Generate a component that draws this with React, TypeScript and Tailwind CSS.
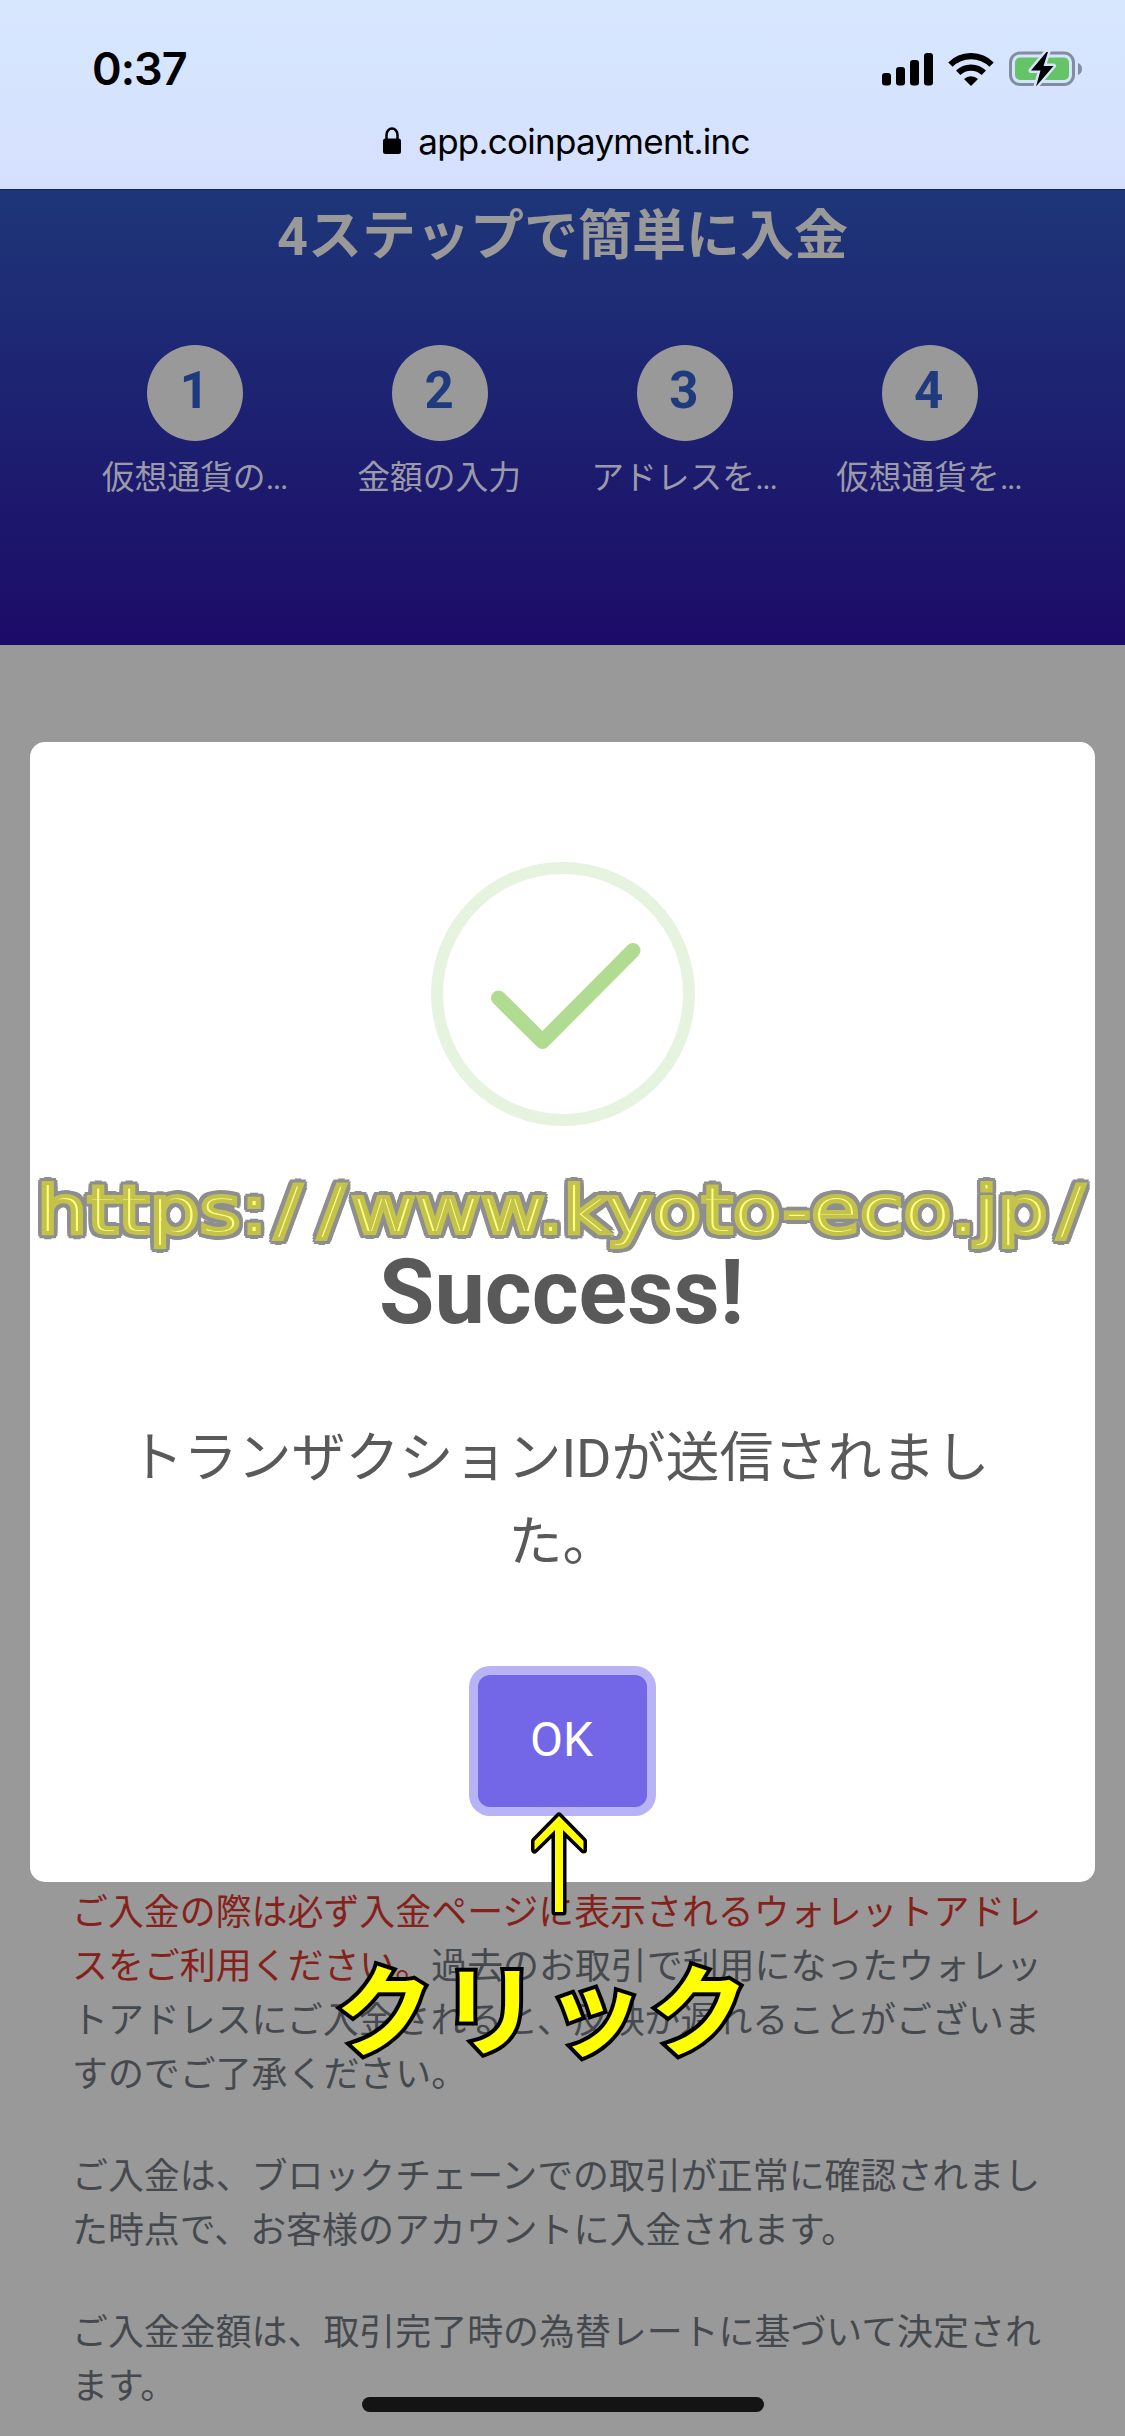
import React from 'react';

const steps = [
    { num: 1, label: '仮想通貨の', truncated: true },
    { num: 2, label: '金額の入力', truncated: false },
    { num: 3, label: 'アドレスを', truncated: true },
    { num: 4, label: '仮想通貨を', truncated: true },
];

const SignalIcon = () => (
    <svg width="52" height="33" viewBox="0 0 52 33">
        <rect x="0" y="20" width="9" height="12.5" rx="3" />
        <rect x="14" y="14" width="9" height="18.5" rx="3" />
        <rect x="28" y="7" width="9" height="25.5" rx="3" />
        <rect x="42" y="0" width="9" height="32.5" rx="3" />
    </svg>
);

const WifiIcon = () => (
    <svg width="46" height="33" viewBox="0 0 46 33">
        <g fill="none" stroke="#000" strokeWidth="6.2">
            <path d="M2.4 11.6a29.2 29.2 0 0 1 41.2 0" />
            <path d="M10.2 19.8a18.2 18.2 0 0 1 25.6 0" />
        </g>
        <path d="M23 33 16 26a10.5 10.5 0 0 1 14 0z" />
    </svg>
);

const BatteryIcon = () => (
    <svg width="74" height="36" viewBox="0 0 74 36">
        <rect x="1.5" y="2" width="63" height="31.5" rx="9.5" fill="none" stroke="#828da3" strokeWidth="3" />
        <path d="M69 12c2.6 1 4 3 4 6s-1.4 5-4 6z" fill="#828da3" />
        <rect x="6" y="6.5" width="54" height="22.5" rx="5" fill="#65c466" />
        <path
            d="M37.5 1 22 19.5h9.5L27 35.5 44.5 15H34.5L39 1z"
            fill="#000"
            stroke="#d6e4fe"
            strokeWidth="5"
            strokeLinejoin="round"
            paintOrder="stroke"
        />
    </svg>
);

const LockIcon = () => (
    <svg width="18" height="28" viewBox="0 0 18 28">
        <rect x="0" y="11.5" width="18" height="15.5" rx="2.5" />
        <path d="M3.5 13V8a5.5 6.5 0 0 1 11 0v5" fill="none" stroke="#000" strokeWidth="2.5" />
    </svg>
);

const StatusBar = () => (
    <header className="h-[189px] shrink-0 bg-linear-to-b from-[#d7e7fe] to-[#d5e0fe] font-['Inter',sans-serif] text-black">
        <div className="flex h-[114px] items-start justify-between pt-[50px] pl-[92px] pr-[42px]">
            <span className="text-[45px] leading-[38px] font-semibold tracking-[-1px]">0:37</span>
            <div className="flex items-start pt-[3px]">
                <SignalIcon />
                <div className="ml-[14px]"><WifiIcon /></div>
                <div className="-mt-[2px] ml-[15px]"><BatteryIcon /></div>
            </div>
        </div>
        <div className="flex items-center justify-center gap-[17px] pl-[8px]">
            <LockIcon />
            <span className="text-[35px] leading-[54px] tracking-[-0.75px]">app.coinpayment.inc</span>
        </div>
    </header>
);

const StepsHero = () => (
    <section className="h-[456px] shrink-0 border-t border-[#16264f] bg-linear-to-b/srgb from-[#1e3679] to-[#1c0b68] px-[73px] text-[#999]">
        <h1 className="pt-[20px] text-center text-[54px] leading-[54px] font-bold">4ステップで簡単に入金</h1>
        <div className="mt-[81px] grid grid-cols-4">
            {steps.map((step) => (
                <div key={step.num} className="flex flex-col items-center">
                    <div className="flex h-24 w-24 items-center justify-center rounded-full bg-[#999] pr-[2px] pb-[4px] text-[51px] font-bold text-[#1f3a7d]">
                        {step.num}
                    </div>
                    <p className="mt-[13px] pr-[2px] text-[32.8px] leading-[48px] whitespace-nowrap text-[#9a9aa8]">
                        {step.label}
                        {step.truncated && <span className="tracking-[-1.5px]">...</span>}
                    </p>
                </div>
            ))}
        </div>
    </section>
);

const Notes = () => (
    <section className="flex flex-col gap-[48px] pt-[1241px] pl-[72px] text-[35.93px] leading-[54px] whitespace-nowrap text-[#45494e]">
        <p>
            <span className="text-[#85211b]">
                ご入金の際は必ず入金ページに表示されるウォレットアドレ<br />
                スをご利用ください。
            </span>
            過去のお取引で利用になったウォレッ<br />
            トアドレスにご入金されると、反映が遅れることがございま<br />
            すのでご了承ください。
        </p>
        <p>
            ご入金は、ブロックチェーンでの取引が正常に確認されまし<br />
            た時点で、お客様のアカウントに入金されます。
        </p>
        <p>
            ご入金金額は、取引完了時の為替レートに基づいて決定され<br />
            ます。
        </p>
    </section>
);

const SuccessModal = () => (
    <div className="absolute top-[742px] left-[30px] flex h-[1140px] w-[1065px] flex-col items-center rounded-[15px] bg-white text-[#595959]">
        <svg className="mt-[120px] shrink-0" width="264" height="264" viewBox="0 0 264 264" fill="none">
            <circle cx="132" cy="132" r="126" stroke="#e6f3de" strokeWidth="12" />
            <path d="M67.5 136 111.5 179.5 202 88.5" stroke="#b0db90" strokeWidth="15" strokeLinecap="round" strokeLinejoin="round" />
        </svg>
        <h2 className="mt-[112px] pr-[2px] text-[90px] leading-[110px] font-bold">Success!</h2>
        <p className="mt-[69px] pr-[6px] text-center text-[54px] leading-[84px] whitespace-nowrap">
            トランザクションIDが送信されまし<br />
            <span className="pl-[6px]">た。</span>
        </p>
        <button className="mt-[90px] h-[132px] w-[169px] rounded-[12px] bg-[#7367e8] pr-[2px] pb-[3px] text-[48px] text-white ring-[9px] ring-[#b8b3f4]">
            OK
        </button>
    </div>
);

const Watermark = () => (
    <div className="absolute top-[1169px] left-[37px] origin-left scale-x-[1.2] font-['DejaVu_Sans',sans-serif] text-[66px] leading-[84px] whitespace-nowrap text-[#ffff80] [-webkit-text-stroke:4.2px_#c3c34c] [text-shadow:5px_0_#8e8e8e,-5px_0_#8e8e8e,0_6px_#8e8e8e,0_-6px_#8e8e8e,5px_3px_#8e8e8e,-5px_3px_#8e8e8e,5px_-3px_#8e8e8e,-5px_-3px_#8e8e8e,4px_5px_#8e8e8e,-4px_5px_#8e8e8e,4px_-5px_#8e8e8e,-4px_-5px_#8e8e8e]">
        https:
        <span className="-mr-[9px] pl-[6px] tracking-[14px]">//</span>
        www.kyoto-eco.jp
        <span className="pl-[8px]">/</span>
    </div>
);

const ClickHint = () => (
    <>
        <svg className="absolute top-[1808px] left-[527px]" width="64" height="112" viewBox="0 0 64 112">
            <path
                d="M32 8 56.5 33V42L36 22V104H28V22L7.5 42V33z"
                fill="#ff0"
                stroke="#000"
                strokeWidth="7"
                strokeLinejoin="round"
                paintOrder="stroke"
            />
        </svg>
        <div className="absolute top-[1954px] left-[335px] text-[99px] leading-[120px] font-bold tracking-[6px] whitespace-nowrap text-[#ff0] [-webkit-text-stroke:8px_black] [paint-order:stroke]">
            クリック
        </div>
    </>
);

export default function App() {
    return (
        <div className="relative flex h-[2436px] w-[1125px] flex-col overflow-hidden bg-[#999] font-['Roboto','Noto_Sans_CJK_JP',sans-serif]">
            <StatusBar />
            <StepsHero />
            <Notes />
            <SuccessModal />
            <Watermark />
            <ClickHint />
            <div className="absolute bottom-[24px] left-[362px] h-[15px] w-[402px] rounded-full bg-[#141414]" />
        </div>
    );
}
